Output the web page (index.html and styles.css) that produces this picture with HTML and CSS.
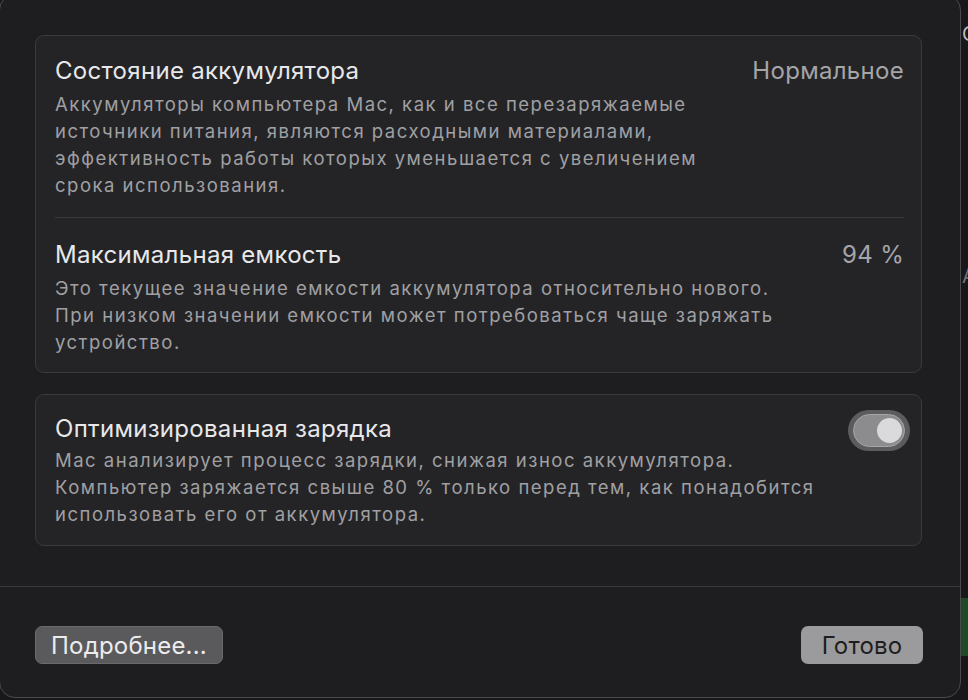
FILE: index.html
```html
<!DOCTYPE html>
<html lang="ru">
<head>
<meta charset="utf-8">
<link rel="stylesheet" href="styles.css">
</head>
<body>
<div class="screen">
  <div class="window">
    <div class="content">
      <div class="card">
        <div class="section first">
          <div class="row">
            <div class="title">Состояние аккумулятора</div>
            <div class="value">Нормальное</div>
          </div>
          <p class="desc">Аккумуляторы компьютера Mac, как и все перезаряжаемые<br>источники питания, являются расходными материалами,<br>эффективность работы которых уменьшается с увеличением<br>срока использования.</p>
        </div>
        <div class="divider"></div>
        <div class="section second">
          <div class="row">
            <div class="title">Максимальная емкость</div>
            <div class="value">94 %</div>
          </div>
          <p class="desc">Это текущее значение емкости аккумулятора относительно нового.<br>При низком значении емкости может потребоваться чаще заряжать<br>устройство.</p>
        </div>
      </div>
      <div class="card card2">
        <div class="row">
          <div class="title">Оптимизированная зарядка</div>
          <div class="toggle"><div class="track"><div class="knob"></div></div></div>
        </div>
        <p class="desc">Mac анализирует процесс зарядки, снижая износ аккумулятора.<br>Компьютер заряжается свыше 80 % только перед тем, как понадобится<br>использовать его от аккумулятора.</p>
      </div>
    </div>
    <div class="footer">
      <button class="btn btn-more">Подробнее...</button>
      <button class="btn btn-done">Готово</button>
    </div>
  </div>
  <div class="outside">
    <span class="peek p1">С</span>
    <span class="peek p2">А</span>
    <span class="green"></span>
  </div>
</div>
</body>
</html>
```
FILE: styles.css
```css
html, body {
  margin: 0;
  padding: 0;
  background: #18181a;
  width: 968px;
  height: 700px;
  overflow: hidden;
  font-family: "Inter", "Liberation Sans", sans-serif;
  -webkit-font-smoothing: antialiased;
}

.screen {
  display: flex;
  width: 968px;
  height: 700px;
}

.window {
  flex: 0 0 962px;
  box-sizing: border-box;
  height: 704px;
  margin-top: -6px;
  margin-left: -1px;
  background: #1e1e21;
  border: 1px solid #4a4a4d;
  border-radius: 16px;
  display: flex;
  flex-direction: column;
}

.content {
  padding: 40px 38px 0 35px;
  display: flex;
  flex-direction: column;
  gap: 21px;
}

.card {
  background: #242427;
  border: 1px solid #3a3a3d;
  border-radius: 9px;
  padding: 0 17px 0 19px;
}

.section.first {
  padding: 21px 0 18px;
}

.section.second {
  padding: 23px 0 16px;
}

.divider {
  height: 1px;
  background: #38383b;
}

.card2 {
  padding: 20px 11px 17px 19px;
}

.row {
  display: flex;
  justify-content: space-between;
  align-items: center;
}

.title {
  color: #e8e8ea;
  font-size: 24px;
  letter-spacing: 0.3px;
  line-height: 28px;
}

.value {
  color: #a5a5a8;
  font-size: 24px;
  letter-spacing: 0.3px;
  line-height: 28px;
}

.desc {
  margin: 6px 0 0;
  color: #a0a0a3;
  font-size: 18.5px;
  letter-spacing: 1.5px;
  line-height: 27px;
}

.card2 .desc {
  margin-top: 4px;
  padding-right: 8px;
}

.toggle {
  width: 62px;
  height: 41px;
  box-sizing: border-box;
  border-radius: 21px;
  background: #5c5c5f;
  padding: 4px 5px;
  margin-top: -5px;
  margin-bottom: -8px;
}

.track {
  height: 100%;
  box-sizing: border-box;
  border-radius: 17px;
  background: #8c8c8f;
  border: 1px solid #a6a6a9;
  display: flex;
  justify-content: flex-end;
  align-items: center;
  padding-right: 2px;
}

.knob {
  width: 25px;
  height: 25px;
  border-radius: 50%;
  background: #dadadc;
}

.footer {
  margin-top: 40px;
  border-top: 1px solid #39393c;
  padding: 39px 37px 0 35px;
  display: flex;
  justify-content: space-between;
}

.btn {
  height: 38px;
  border: none;
  border-radius: 7px;
  font-family: "Inter", "Liberation Sans", sans-serif;
  font-size: 24px;
  letter-spacing: 0.2px;
  padding: 0 10px;
  box-sizing: border-box;
}

.btn-more {
  width: 188px;
  background: #5a5a5d;
  color: #ececee;
  border: 1px solid #6a6a6d;
}

.btn-done {
  width: 122px;
  background: #9b9b9d;
  color: #1e1e20;
}

.outside {
  flex: 1;
  position: relative;
  overflow: hidden;
  background: #18181a;
}

.peek {
  position: absolute;
  color: #bdbdc0;
  font-size: 20px;
  line-height: 24px;
  left: 1px;
}

.p1 { top: 22px; }
.p2 { top: 264px; color: #707073; }

.green {
  position: absolute;
  left: 0;
  right: 0;
  top: 598px;
  height: 58px;
  background: #1f4a2a;
}
```
